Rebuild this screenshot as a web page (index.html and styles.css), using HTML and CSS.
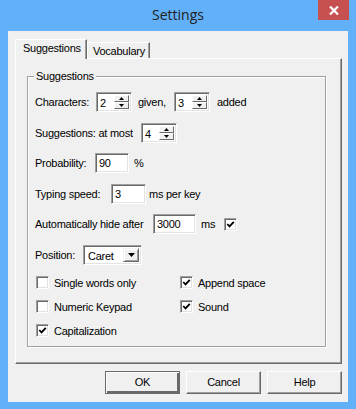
FILE: index.html
```html
<!DOCTYPE html>
<html lang="en">
<head>
    <meta charset="UTF-8">
    <title>Settings</title>
    <link rel="stylesheet" href="styles.css">
</head>
<body>
    <div class="window">
        <div class="titlebar">
            <span></span>
            <span class="title">Settings</span>
            <span class="close-wrap">
                <span class="close">
                    <svg width="10" height="9" viewBox="0 0 10 9"><path d="M1 0.5 L9 8.5 M9 0.5 L1 8.5" stroke="#fff" stroke-width="2.2" fill="none"/></svg>
                </span>
            </span>
        </div>

        <div class="client">
            <!-- Tabs -->
            <div class="tabs">
                <div class="tab active">Suggestions</div>
                <div class="tab">Vocabulary</div>
            </div>

            <div class="panel">
                <div class="group">
                    <div class="group-title">Suggestions</div>

                    <div class="fields">
                        <div class="row">
                            <span class="label w-chars">Characters:</span>
                            <span class="spin">
                                <span class="spin-value">2</span>
                                <span class="spin-btns">
                                    <span class="spin-btn"><svg width="5" height="3"><polygon points="0,3 2.5,0 5,3" fill="#000"/></svg></span>
                                    <span class="spin-btn"><svg width="5" height="3"><polygon points="0,0 2.5,3 5,0" fill="#000"/></svg></span>
                                </span>
                            </span>
                            <span class="label w-given">given,</span>
                            <span class="spin">
                                <span class="spin-value">3</span>
                                <span class="spin-btns">
                                    <span class="spin-btn"><svg width="5" height="3"><polygon points="0,3 2.5,0 5,3" fill="#000"/></svg></span>
                                    <span class="spin-btn"><svg width="5" height="3"><polygon points="0,0 2.5,3 5,0" fill="#000"/></svg></span>
                                </span>
                            </span>
                            <span class="label after-lg">added</span>
                        </div>

                        <div class="row">
                            <span class="label w-most">Suggestions: at most</span>
                            <span class="spin">
                                <span class="spin-value">4</span>
                                <span class="spin-btns">
                                    <span class="spin-btn"><svg width="5" height="3"><polygon points="0,3 2.5,0 5,3" fill="#000"/></svg></span>
                                    <span class="spin-btn"><svg width="5" height="3"><polygon points="0,0 2.5,3 5,0" fill="#000"/></svg></span>
                                </span>
                            </span>
                        </div>

                        <div class="row">
                            <span class="label w-prob">Probability:</span>
                            <span class="edit w-34">90</span>
                            <span class="label after">%</span>
                        </div>

                        <div class="row">
                            <span class="label w-speed">Typing speed:</span>
                            <span class="edit w-35">3</span>
                            <span class="label after-sm">ms per key</span>
                        </div>

                        <div class="row">
                            <span class="label w-hide">Automatically hide after</span>
                            <span class="edit w-43">3000</span>
                            <span class="label after w-ms">ms</span>
                            <span class="checkbox checked"><svg width="9" height="9" viewBox="0 0 9 9"><polyline points="1.3,4 3.5,6.4 7.8,1.8" stroke="#000" stroke-width="1.8" fill="none"/></svg></span>
                        </div>

                        <div class="row">
                            <span class="label w-pos">Position:</span>
                            <span class="combo">
                                <span class="combo-value">Caret</span>
                                <span class="combo-btn"><svg width="7" height="4"><polygon points="0,0 7,0 3.5,4" fill="#000"/></svg></span>
                            </span>
                        </div>
                    </div>

                    <div class="checks">
                        <label class="check"><span class="checkbox"></span>Single words only</label>
                        <label class="check"><span class="checkbox checked"><svg width="9" height="9" viewBox="0 0 9 9"><polyline points="1.3,4 3.5,6.4 7.8,1.8" stroke="#000" stroke-width="1.8" fill="none"/></svg></span>Append space</label>
                        <label class="check"><span class="checkbox"></span>Numeric Keypad</label>
                        <label class="check"><span class="checkbox checked"><svg width="9" height="9" viewBox="0 0 9 9"><polyline points="1.3,4 3.5,6.4 7.8,1.8" stroke="#000" stroke-width="1.8" fill="none"/></svg></span>Sound</label>
                        <label class="check"><span class="checkbox checked"><svg width="9" height="9" viewBox="0 0 9 9"><polyline points="1.3,4 3.5,6.4 7.8,1.8" stroke="#000" stroke-width="1.8" fill="none"/></svg></span>Capitalization</label>
                    </div>
                </div>
            </div>

            <!-- Dialog buttons -->
            <div class="buttons">
                <span class="button default">OK</span>
                <span class="button">Cancel</span>
                <span class="button">Help</span>
            </div>
        </div>
    </div>
</body>
</html>
```

FILE: styles.css
```css
body { margin: 0; background: #62b0f7; }
.window {
    width: 356px; height: 409px; background: #62b0f7;
    font-family: "Liberation Sans", Arial, sans-serif; font-size: 11px;
    color: #000;
}

/* Title bar */
.titlebar {
    height: 31px; display: grid;
    grid-template-columns: 1fr auto 1fr; align-items: start;
}
.title {
    font-family: "Open Sans", sans-serif; font-size: 14px;
    line-height: 30px; color: #222;
}
.close-wrap { display: flex; justify-content: flex-end; padding-right: 7px; }
.close {
    width: 31px; height: 20px; background: #c75050;
    display: flex; align-items: center; justify-content: center;
}

/* Client area */
.client {
    margin: 0 8px; height: 371px; background: #f0f0f0;
    display: flex; flex-direction: column;
    letter-spacing: -0.25px;
}

.tabs {
    display: flex; align-items: flex-end;
    margin-top: 8px; padding-left: 7px; height: 19px;
}
.tab {
    height: 16px; padding: 0 5px 0 5px; line-height: 16px;
    border-top: 1px solid #fff; border-left: 1px solid #fff;
    border-right: 1px solid #696969;
    box-shadow: inset -1px 0 #a0a0a0;
    box-sizing: border-box; width: 63px;
}
.tab.active {
    height: 20px; width: 72px; margin-bottom: -1px;
    padding-left: 7px; line-height: 17px;
    background: #f0f0f0; position: relative; z-index: 1;
}

.panel {
    margin: 0 6px 0 7px; height: 306px; box-sizing: border-box;
    border: 1px solid; border-color: #fff #696969 #696969 #fff;
    box-shadow: inset -1px -1px #a0a0a0;
    display: flex; flex-direction: column;
}

/* Group box */
.group {
    flex: 1; margin: 17px 15px 16px 11px;
    border: 1px solid #a0a0a0;
    box-shadow: 1px 1px 0 #fff, inset 1px 1px 0 #fff;
}
.group-title {
    width: fit-content; margin: -7px 0 0 6px; padding: 0 2px;
    line-height: 13px; background: #f0f0f0;
}

.fields {
    display: flex; flex-direction: column; gap: 10.6px;
    margin-top: 9px; padding-left: 7px;
}
.row { height: 20px; display: flex; align-items: center; }
.label { white-space: nowrap; }
.w-chars { width: 61px; }
.w-given { width: 36px; margin-left: 6px; }
.w-most { width: 106px; }
.w-prob { width: 60px; }
.w-speed { width: 76px; }
.w-hide { width: 118px; }
.w-pos { width: 48px; }
.after { margin-left: 5px; }
.after-lg { margin-left: 7px; }
.after-sm { margin-left: 3px; }
.w-ms { width: 23px; }

/* Sunken fields */
.edit, .spin, .combo, .checkbox {
    box-sizing: border-box; background: #fff;
    border: 1px solid; border-color: #a0a0a0 #fff #fff #a0a0a0;
    box-shadow: inset 1px 1px #696969, inset -1px -1px #e3e3e3;
}
.edit { height: 20px; padding: 0 3px; line-height: 18px; }
.w-34 { width: 34px; }
.w-35 { width: 35px; }
.w-43 { width: 43px; }

.spin { width: 36px; height: 20px; display: flex; padding: 2px 2px 2px 0; }
.spin-value { flex: 1; padding-left: 3px; line-height: 16px; }
.spin-btns { width: 15px; display: flex; flex-direction: column; }
.spin-btn {
    flex: 1; background: #f0f0f0; box-sizing: border-box;
    border: 1px solid; border-color: #fff #696969 #696969 #fff;
    display: flex; align-items: center; justify-content: center;
}

.combo { width: 59px; height: 20px; display: flex; padding: 2px; }
.combo-value { flex: 1; padding-left: 2px; line-height: 16px; }
.combo-btn {
    width: 16px; background: #f0f0f0; box-sizing: border-box;
    border: 1px solid; border-color: #f0f0f0 #696969 #696969 #f0f0f0;
    box-shadow: inset 1px 1px #fff, inset -1px -1px #a0a0a0;
    display: flex; align-items: center; justify-content: center;
}

.checkbox {
    width: 13px; height: 13px; flex: none;
    display: flex; align-items: center; justify-content: center;
}

.checks {
    display: grid; grid-template-columns: 144px auto;
    grid-auto-rows: 20px; row-gap: 4px;
    margin-top: 8px; padding-left: 8px;
}
.check { display: flex; align-items: center; gap: 5px; }

/* Bottom buttons */
.buttons {
    display: flex; justify-content: flex-end; gap: 6px;
    margin-top: 7px; padding-right: 6px;
}
.button {
    width: 75px; height: 23px; box-sizing: border-box;
    text-align: center; line-height: 21px; background: #f0f0f0;
    border: 1px solid; border-color: #fff #696969 #696969 #fff;
    box-shadow: inset -1px -1px #a0a0a0;
}
.button.default {
    border: 1px solid #6a6a6a;
    box-shadow: inset 1px 1px #fff, inset -2px -2px #696969;
}
```
